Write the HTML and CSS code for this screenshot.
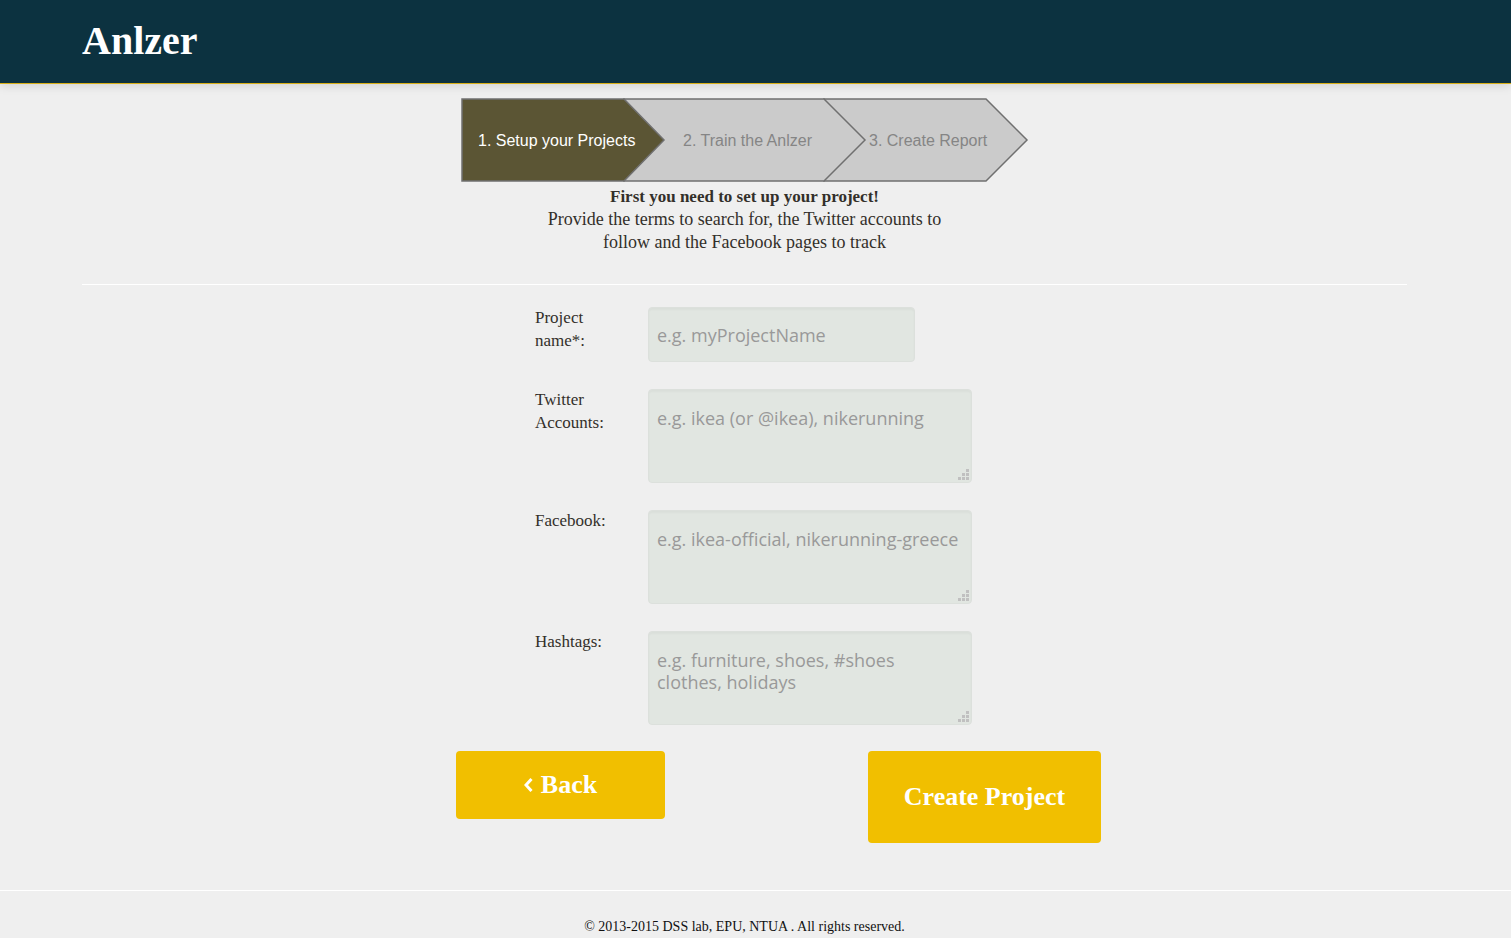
FILE: index.html
```html
<!DOCTYPE html>
<html lang="en">
<head>
<meta charset="utf-8">
<title>Anlzer</title>
<link rel="stylesheet" href="styles.css">
</head>
<body>
<header class="topbar"><a class="brand" href="#">Anlzer</a></header>
<main class="content">
  <section class="intro">
    <svg class="steps" width="568" height="84" viewBox="0 0 568 84" role="img" aria-label="Project steps">
      <path class="step" d="M363 1H525L566 42L525 83H363Z"/>
      <path class="step" d="M163 1H363L404 42L363 83H163Z"/>
      <path class="step step-active" d="M1 1H163L203 42L163 83H1Z"/>
      <text class="step-text step-text-active" x="17" y="48">1. Setup your Projects</text>
      <text class="step-text" x="222" y="48">2. Train the Anlzer</text>
      <text class="step-text" x="408" y="48">3. Create Report</text>
    </svg>
    <p class="lead"><strong class="lead-title">First you need to set up your project!</strong><br>Provide the terms to search for, the Twitter accounts to<br>follow and the Facebook pages to track</p>
  </section>
  <form class="setup">
    <div class="fields">
      <div class="row">
        <label class="label" for="name">Project name*:</label>
        <input class="field field-name" id="name" type="text" placeholder="e.g. myProjectName">
      </div>
      <div class="row">
        <label class="label" for="twitter">Twitter Accounts:</label>
        <div class="area"><textarea class="field field-area" id="twitter" placeholder="e.g. ikea (or @ikea), nikerunning"></textarea>
          <svg class="grip" width="11" height="11" viewBox="0 0 11 11" aria-hidden="true"><path d="M8 0h3v3h-3zM8 4h3v3h-3zM4 4h3v3h-3zM8 8h3v3h-3zM4 8h3v3h-3zM0 8h3v3h-3z"/></svg></div>
      </div>
      <div class="row">
        <label class="label" for="facebook">Facebook:</label>
        <div class="area"><textarea class="field field-area" id="facebook" placeholder="e.g. ikea-official, nikerunning-greece"></textarea>
          <svg class="grip" width="11" height="11" viewBox="0 0 11 11" aria-hidden="true"><path d="M8 0h3v3h-3zM8 4h3v3h-3zM4 4h3v3h-3zM8 8h3v3h-3zM4 8h3v3h-3zM0 8h3v3h-3z"/></svg></div>
      </div>
      <div class="row">
        <label class="label" for="hashtags">Hashtags:</label>
        <div class="area"><textarea class="field field-area" id="hashtags" placeholder="e.g. furniture, shoes, #shoes clothes, holidays"></textarea>
          <svg class="grip" width="11" height="11" viewBox="0 0 11 11" aria-hidden="true"><path d="M8 0h3v3h-3zM8 4h3v3h-3zM4 4h3v3h-3zM8 8h3v3h-3zM4 8h3v3h-3zM0 8h3v3h-3z"/></svg></div>
      </div>
    </div>
    <div class="actions">
      <button class="btn btn-back" type="button"><svg width="9" height="14" viewBox="0 0 9 14" aria-hidden="true"><path d="M7.5 1L2 7L7.5 13" fill="none" stroke="#fff" stroke-width="3"/></svg>Back</button>
      <button class="btn btn-create" type="submit">Create Project</button>
    </div>
  </form>
</main>
<footer class="footer">© 2013-2015 DSS lab, EPU, NTUA . All rights reserved.</footer>
</body>
</html>
```
FILE: styles.css
```css
* { box-sizing: border-box; }
body {
  margin: 0;
  background: #efefef;
  color: #332f2a;
  font-family: "Liberation Serif", serif;
  font-size: 17px;
  line-height: 23px;
}
.topbar {
  height: 84px;
  padding: 18px 82px 0;
  background: #0c3240;
  border-bottom: 1px solid #d9b019;
  box-shadow: 0 1px 10px rgba(0, 0, 0, 0.15);
}
.brand {
  color: #fff;
  font-size: 40px;
  line-height: 46px;
  font-weight: bold;
  text-decoration: none;
}
.content { padding: 0 104px 0 82px; }
.intro {
  padding: 14px 0 30px;
  border-bottom: 1px solid #fff;
  font-size: 18px;
  text-align: center;
}
.steps { display: block; margin: 0 auto; }
.step { fill: #cbcbcb; stroke: #707070; stroke-width: 1.5; }
.step-active { fill: #5b5534; }
.step-text {
  fill: #858585;
  font-family: "Liberation Sans", Arial, sans-serif;
  font-size: 16px;
}
.step-text-active { fill: #fff; }
.lead { margin: 3px 0 0; }
.lead-title { font-size: 17px; }
.setup {
  max-width: 713px;
  margin: 0 auto;
  padding: 22px 0 47px 68px;
}
.fields {
  display: grid;
  gap: 27px;
  padding-left: 79px;
}
.row {
  display: grid;
  grid-template-columns: 80px 324px;
  column-gap: 33px;
  align-items: start;
}
.label { margin-top: -1px; }
.field {
  display: block;
  border: 1px solid #dce0dc;
  border-radius: 4px;
  background: #e1e6e1;
  box-shadow: inset 0 2px 2px rgba(0, 0, 0, 0.03);
  color: #444;
  font-family: "Open Sans", sans-serif;
  font-size: 18px;
  line-height: 22px;
}
.field::placeholder { color: #999; opacity: 1; }
.field-name { width: 267px; height: 55px; padding: 0 8px; }
.area { position: relative; }
.field-area {
  width: 100%;
  height: 94px;
  padding: 17px 8px;
  resize: none;
  overflow: hidden;
}
.grip {
  position: absolute;
  right: 3px;
  bottom: 3px;
  fill: #c0c0c0;
  pointer-events: none;
}
.actions {
  display: flex;
  justify-content: space-between;
  align-items: flex-start;
  margin-top: 26px;
}
.btn {
  border: 0;
  border-radius: 4px;
  background: #f1bf00;
  color: #fff;
  font-family: "Liberation Serif", serif;
  font-size: 26px;
  line-height: 28px;
  font-weight: bold;
}
.btn-back {
  display: flex;
  align-items: center;
  justify-content: center;
  gap: 8px;
  min-width: 209px;
  padding: 20px 24px;
}
.btn-create { min-width: 233px; padding: 32px 24px; }
.footer {
  padding: 24px 104px 0 82px;
  border-top: 1px solid #fff;
  color: #111;
  font-size: 14px;
  text-align: center;
}
```
